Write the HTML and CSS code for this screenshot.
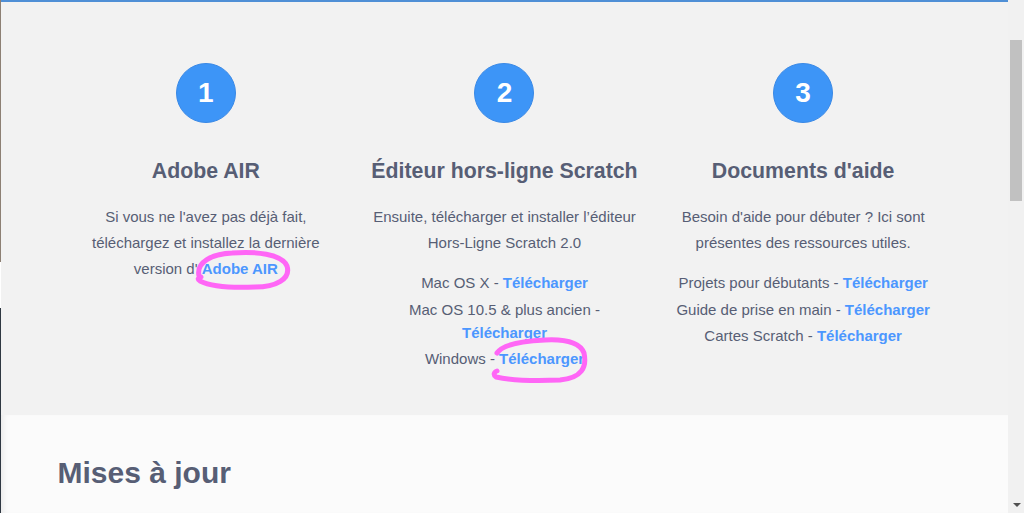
FILE: index.html
```html
<!DOCTYPE html>
<html lang="fr">

<head>
    <meta charset="UTF-8">
    <meta name="viewport" content="width=device-width, initial-scale=1.0">
    <title>Éditeur hors-ligne Scratch</title>
    <link rel="stylesheet" href="styles.css">
</head>

<body>
    <div class="window">
        <div class="edge"></div>

        <div class="page">
            <!-- Les trois étapes -->
            <section class="steps">
                <div class="container columns">
                    <div class="step">
                        <div class="step-number">1</div>
                        <h3>Adobe AIR</h3>
                        <p>Si vous ne l'avez pas déjà fait, téléchargez et installez la dernière version d' <a href="#">Adobe AIR</a></p>
                    </div>

                    <div class="step">
                        <div class="step-number">2</div>
                        <h3>Éditeur hors-ligne Scratch</h3>
                        <p>Ensuite, télécharger et installer l’éditeur Hors-Ligne Scratch 2.0</p>
                        <ul>
                            <li>Mac OS X - <a href="#">Télécharger</a></li>
                            <li>Mac OS 10.5 &amp; plus ancien - <a href="#">Télécharger</a></li>
                            <li>Windows - <a href="#">Télécharger</a></li>
                        </ul>
                    </div>

                    <div class="step">
                        <div class="step-number">3</div>
                        <h3>Documents d'aide</h3>
                        <p>Besoin d'aide pour débuter ? Ici sont présentes des ressources utiles.</p>
                        <ul>
                            <li>Projets pour débutants - <a href="#">Télécharger</a></li>
                            <li>Guide de prise en main - <a href="#">Télécharger</a></li>
                            <li>Cartes Scratch - <a href="#">Télécharger</a></li>
                        </ul>
                    </div>
                </div>
            </section>

            <!-- Mises à jour -->
            <section class="updates">
                <div class="container">
                    <h2>Mises à jour</h2>
                </div>
            </section>
        </div>

        <div class="scrollbar">
            <div class="thumb"></div>
            <div class="arrow-down"></div>
        </div>
    </div>

    <!-- annotations au feutre -->
    <svg class="marks" width="1024" height="513" viewBox="0 0 1024 513">
        <path d="M199 276 C196 262 212 254 232 253 C255 251 282 254 287 266 C291 279 276 287 255 287 C232 288 210 286 200 281 C197 279 198 278 201 277" />
        <path d="M497 353 C503 344 522 341 545 340 C565 339 580 343 584 353 C587 367 582 378 560 380 C536 381 510 380 496 377 C493 375 494 372 497 371" />
    </svg>
</body>

</html>
```

FILE: styles.css
```css
html,
body {
    margin: 0;
    height: 100%;
    overflow: hidden;
}

body {
    font-family: "Liberation Sans", Arial, sans-serif;
    color: #575e75;
    background-color: #f2f2f2;
    position: relative;
}

.window {
    display: flex;
    height: 513px;
}

.edge {
    width: 1px;
    flex-shrink: 0;
    background: linear-gradient(to bottom, #8d8074 0, #8d8074 262px, #ffffff 262px, #ffffff 308px, #2f3842 308px);
}

.page {
    flex: 1;
    border-top: 2px solid #4f8fd6;
    display: flex;
    flex-direction: column;
}

.container {
    width: 896px;
    margin: 0 auto;
}

.steps {
    background-color: #f2f2f2;
    padding: 61px 0 0;
    height: 352px;
}

.columns {
    display: grid;
    grid-template-columns: repeat(3, 1fr);
}

.step {
    display: flex;
    flex-direction: column;
    align-items: center;
    text-align: center;
    padding: 0 12px;
}

.step-number {
    width: 58px;
    height: 58px;
    border-radius: 50%;
    background-color: #3d95f7;
    border: 1px solid #3a89e6;
    color: #fff;
    font-weight: bold;
    font-size: 28px;
    display: flex;
    align-items: center;
    justify-content: center;
}

h3 {
    margin: 37px 0 0;
    font-size: 21.3px;
    line-height: 23px;
}

p {
    margin: 21px 0 0;
    font-size: 15px;
    line-height: 26px;
}

ul {
    list-style: none;
    margin: 15px 0 0;
    padding: 0;
    font-size: 15px;
    line-height: 23px;
}

li {
    margin-bottom: 3.5px;
}

a {
    color: #4c97ff;
    font-weight: bold;
    text-decoration: none;
}

.updates {
    flex: 1;
    background-color: #fbfbfb;
    padding-top: 40px;
    box-shadow: inset 6px 0 6px -4px rgba(0, 0, 0, 0.08);
}

.updates .container {
    width: 894px;
}

h2 {
    margin: 0;
    font-size: 30px;
    line-height: 35px;
}

.scrollbar {
    width: 16px;
    flex-shrink: 0;
    background-color: #f1f1f1;
    position: relative;
}

.thumb {
    margin: 40px 0 0 2px;
    width: 12px;
    height: 161px;
    background-color: #c1c1c1;
}

.arrow-down {
    position: absolute;
    left: 5px;
    bottom: 6px;
    width: 0;
    height: 0;
    border-left: 4px solid transparent;
    border-right: 4px solid transparent;
    border-top: 4px solid #505050;
}

.marks {
    position: absolute;
    top: 0;
    left: 0;
    pointer-events: none;
}

.marks path {
    fill: none;
    stroke: #ff66f6;
    stroke-width: 5;
    stroke-linecap: round;
    stroke-linejoin: round;
}
```
